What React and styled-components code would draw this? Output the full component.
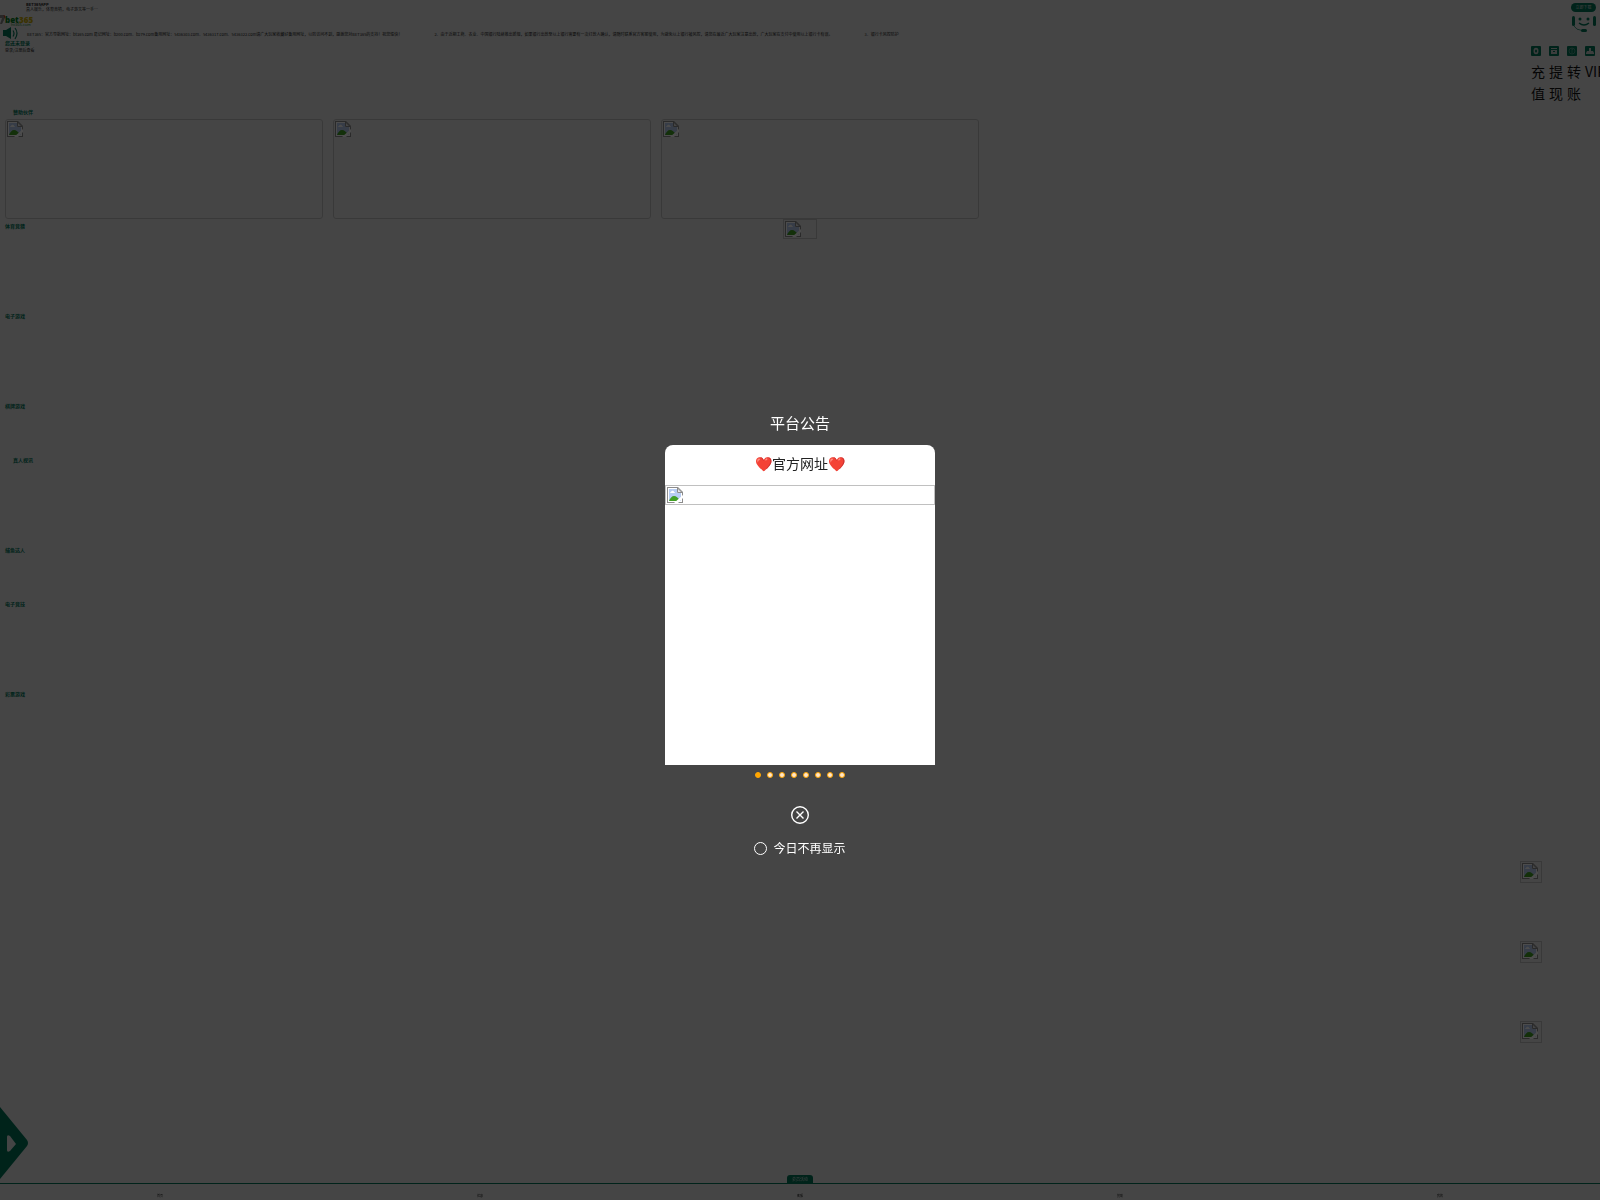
import React, { useState } from "react";
import styled, { createGlobalStyle } from "styled-components";

const partners = ["partner-1", "partner-2", "partner-3"];

const sections = [
  { title: "体育竞猜", height: 90 },
  { title: "电子游戏", height: 90 },
  { title: "棋牌游戏", height: 54 },
  { title: "真人视讯", height: 90, indent: true },
  { title: "捕鱼达人", height: 54 },
  { title: "电子竞技", height: 90 },
  { title: "彩票游戏", height: 90 },
];

const notices = [
  "BET365：官方导航网址：bt365.com 易记网址：b200.com、b279.com备用网址：5436303.com、5436317.com、5436322.com请广大玩家收藏好备用网址，以防访问不到，感谢您对BET365的支持！祝您愉快！",
  "2、由于近期工商、农业、中国银行陆续推出新规，如果银行出款至以上银行需要有一次打款人确认，请随时联系官方客服使用，为避免以上银行被风控，请您在最近广大玩家注意出款，广大玩家在支付中使用以上银行卡有误。",
  "3、银行卡风控防护",
];

const tabs = ["首页", "优惠", "客服", "赞助", "我的"];

const GlobalStyle = createGlobalStyle`
  * {
    box-sizing: border-box;
  }
  body {
    margin: 0;
    background: #e8e8e8;
    color: #222;
    font-family: "Noto Sans CJK SC", "Noto Sans", sans-serif;
    overflow: hidden;
  }
  button {
    border: 0;
    padding: 0;
    background: none;
    font-family: inherit;
    cursor: pointer;
  }
  a {
    color: inherit;
    text-decoration: none;
  }
`;

const BrokenIcon = () => (
  <svg width="16" height="16" viewBox="0 0 16 16" aria-hidden="true">
    <path d="M0 0h11l5 5v11H0z" fill="#8c8c8c" />
    <path d="M1 1h9.500L15 5.500V15H1z" fill="#fff" />
    <path d="M2 2h8v4h4v8H2z" fill="#b8cdf2" />
    <path d="M3 6c0-1 1-1 1-1 1-2 3-1 3 0 1 0 1 1 1 1z" fill="#fff" />
    <path d="M2 14c1-3 3-5 5-5s5 2 6 5z" fill="#42a024" />
    <path d="M10.500 1v4.500H15z" fill="#e8e8e8" stroke="#8c8c8c" />
    <path d="M16 8v3l-5 5H7z" fill="#fff" />
  </svg>
);

const DownloadIcon = () => (
  <svg width="24" height="20" viewBox="0 0 24 20" aria-hidden="true">
    <g fill="#007558">
      <rect x="0" y="2" width="3" height="10" rx="1.500" />
      <rect x="21" y="2" width="3" height="10" rx="1.500" />
      <circle cx="8" cy="5" r="1.500" />
      <circle cx="16" cy="5" r="1.500" />
      <rect x="9" y="15" width="6" height="3" rx="1.500" />
    </g>
    <path d="M7 9q5 4 10 0" fill="none" stroke="#007558" strokeWidth="1.400" />
    <path d="M2 12q2 4 8 4.500" fill="none" stroke="#007558" strokeWidth="0.700" />
  </svg>
);

const SpeakerIcon = () => (
  <svg width="16" height="13" viewBox="0 0 16 13" aria-hidden="true">
    <path d="M0 3h3l5-3v12L3 9H0z" fill="#007558" />
    <path
      d="M10 3.500q2 3 0 6M12 1q4 5 0 11"
      fill="none"
      stroke="#007558"
      strokeWidth="1.200"
    />
  </svg>
);

const actionShapes = {
  deposit: (
    <>
      <ellipse cx="5" cy="5" rx="2.500" ry="3.300" fill="#ccc" />
      <ellipse cx="5" cy="5" rx="1" ry="1.500" fill="#007558" />
    </>
  ),
  withdraw: (
    <>
      <path d="M2 2h6v1H2zM2 4h6v4H2z" fill="#ccc" />
      <path d="M4 5h2v1H4z" fill="#007558" />
    </>
  ),
  transfer: (
    <>
      <circle cx="5" cy="5" r="3" fill="none" stroke="#5fa391" strokeWidth="0.800" />
      <path d="M4 3h2L5 4.500V7" fill="none" stroke="#5fa391" strokeWidth="0.800" />
    </>
  ),
  vip: <path d="M4 2h2v3h2l1 2v1H1V7l1-2h2z" fill="#ccc" />,
};

const actions = [
  { label: "充值", icon: "deposit" },
  { label: "提现", icon: "withdraw" },
  { label: "转账", icon: "transfer" },
  { label: "VIP", icon: "vip" },
];

const Page = styled.div`
  display: flex;
  flex-direction: column;
  min-height: 100vh;
  overflow: hidden;
`;

const Banner = styled.header`
  display: flex;
  justify-content: space-between;
  height: 14px;
  padding: 2px 4px 0 26px;
`;

const AppInfo = styled.div`
  font-size: 4px;
  line-height: 5px;
  color: #222;
`;

const DownloadButton = styled.button`
  width: 25px;
  height: 9px;
  margin-top: 1px;
  border-radius: 5px;
  background: #007558;
  color: #ddd;
  font-size: 4px;
  line-height: 9px;
`;

const LogoRow = styled.div`
  display: flex;
  justify-content: space-between;
  height: 12px;
  padding-right: 4px;
`;

const Brand = styled.a`
  display: flex;
  align-items: flex-start;
  height: 12px;
`;

const NoticeBar = styled.div`
  display: flex;
  align-items: center;
  gap: 8px;
  height: 14px;
  padding-left: 3px;
`;

const NoticeText = styled.div`
  display: flex;
  gap: 32px;
  padding-top: 2px;
  font-size: 4px;
  line-height: 6px;
  white-space: nowrap;
`;

const Account = styled.div`
  display: flex;
  justify-content: space-between;
  height: 68px;
  padding-left: 5px;
`;

const Login = styled.a`
  font-size: 4px;
  line-height: 8px;

  strong {
    display: block;
    font-size: 5px;
    line-height: 6px;
    color: #007558;
  }
`;

const Actions = styled.nav`
  display: grid;
  grid-template-columns: repeat(4, 18px);
  width: 69px;
  padding-top: 6px;
`;

const Action = styled.a`
  width: 14px;
  color: #111;
  font-size: 14px;
  line-height: 22px;

  svg {
    display: block;
    margin-bottom: 4px;
  }
`;

const SectionTitle = styled.h2`
  margin: 0;
  padding-left: ${({ $indent }) => ($indent ? "13px" : "5px")};
  font-size: 5px;
  line-height: 8px;
  color: #007558;
`;

const Partners = styled.div`
  display: grid;
  grid-template-columns: repeat(3, 318px);
  gap: 10px;
  height: 100px;
  margin: 3px 0 0 5px;
`;

const BrokenImage = styled.div`
  width: ${({ $width }) => $width || "100%"};
  height: ${({ $height }) => $height}px;
  padding: 1px;
  border: 1px solid silver;
  border-radius: ${({ $radius }) => $radius || 0}px;
  overflow: hidden;

  svg {
    display: block;
  }
`;

const Section = styled.section`
  display: grid;
  grid-template-columns: 1fr 34px 1fr;
  align-items: start;
  height: ${({ $height }) => $height}px;

  ${SectionTitle} {
    padding-top: 3px;
  }
`;

const FloatingLinks = styled.aside`
  position: fixed;
  right: 58px;
  bottom: 157px;
  display: grid;
  gap: 58px;
`;

const DrawerToggle = styled.button`
  position: fixed;
  left: 0;
  bottom: 20px;
  height: 73px;

  svg {
    display: block;
  }
`;

const TabBar = styled.nav`
  position: fixed;
  left: 0;
  right: 0;
  bottom: 0;
`;

const Promo = styled.a`
  display: block;
  width: 26px;
  height: 8px;
  margin: 0 auto;
  border-radius: 3px 3px 0 0;
  background: #007558;
  color: #ddd;
  font-size: 4px;
  line-height: 8px;
  text-align: center;
`;

const Tabs = styled.div`
  display: grid;
  grid-template-columns: repeat(5, 1fr);
  height: 17px;
  padding-top: 9px;
  border-top: 1px solid #007558;
  font-size: 3px;
  line-height: 6px;
  text-align: center;
`;

const Overlay = styled.div`
  position: fixed;
  inset: 0;
  display: flex;
  flex-direction: column;
  align-items: center;
  padding-top: 412px;
  background: rgba(0, 0, 0, 0.7);
  color: #fff;
`;

const DialogTitle = styled.h1`
  margin: 0 0 11px;
  font-size: 15px;
  font-weight: 400;
  line-height: 22px;
`;

const Card = styled.article`
  width: 270px;
  height: 320px;
  border-radius: 8px 8px 0 0;
  background: #fff;
  color: #222;
`;

const CardTitle = styled.h3`
  margin: 0;
  padding-bottom: 4px;
  font-size: 14px;
  font-weight: 400;
  line-height: 36px;
  text-align: center;
`;

const Dots = styled.div`
  display: flex;
  gap: 6px;
  margin-top: 7px;
`;

const Dot = styled.button`
  width: 6px;
  height: 6px;
  border: 1px solid #ffa500;
  border-radius: 50%;
  background: ${({ $active }) => ($active ? "#ffa500" : "#ffe6cc")};
`;

const CloseButton = styled.button`
  width: 18px;
  height: 18px;
  margin-top: 28px;

  svg {
    display: block;
  }
`;

const Remember = styled.label`
  display: flex;
  align-items: center;
  gap: 6px;
  margin-top: 15px;
  font-size: 12px;
  line-height: 18px;

  input {
    appearance: none;
    width: 13px;
    height: 13px;
    margin: 1px 0 0;
    border: 1px solid #fff;
    border-radius: 50%;
  }

  input:checked {
    background: #ffa500;
  }
`;

const Logo = () => (
  <svg width="36" height="12" viewBox="0 0 36 12" aria-hidden="true">
    <path d="M0 1h4l1 3-3 6H0l2-6H0z" fill="#888" />
    <path d="M4 1l1 3" stroke="#c53b2b" />
    <text x="5" y="9" fontFamily="Open Sans" fontSize="8" fontWeight="800" fill="#087b22">
      bet
    </text>
    <text x="19" y="9" fontFamily="Open Sans" fontSize="8" fontWeight="800" fill="#c5a900">
      365
    </text>
    <text x="11" y="12" fontFamily="Open Sans" fontSize="4" fill="#087b22">
      ht365.com
    </text>
  </svg>
);

const App = () => {
  const [open, setOpen] = useState(true);
  const [slide, setSlide] = useState(0);

  return (
    <>
      <GlobalStyle />
      <Page>
        <Banner>
          <AppInfo>
            <strong>BET365APP</strong>
            <div>真人娱乐，体育竞猜，电子游艺等一手…</div>
          </AppInfo>
          <DownloadButton>立即下载</DownloadButton>
        </Banner>
        <LogoRow>
          <Brand href="#" aria-label="bet365">
            <Logo />
          </Brand>
          <DownloadIcon />
        </LogoRow>
        <NoticeBar>
          <SpeakerIcon />
          <NoticeText>
            {notices.map((notice) => (
              <span key={notice}>{notice}</span>
            ))}
          </NoticeText>
        </NoticeBar>
        <Account>
          <Login href="#">
            <strong>您还未登录</strong>
            登录/注册后查看
          </Login>
          <Actions>
            {actions.map(({ label, icon }) => (
              <Action href="#" key={label}>
                <svg width="10" height="10" viewBox="0 0 10 10" aria-hidden="true">
                  <rect width="10" height="10" rx="1" fill="#007558" />
                  {actionShapes[icon]}
                </svg>
                {label}
              </Action>
            ))}
          </Actions>
        </Account>
        <SectionTitle $indent>赞助伙伴</SectionTitle>
        <Partners>
          {partners.map((partner) => (
            <BrokenImage key={partner} $height={100} $radius={3}>
              <BrokenIcon />
            </BrokenImage>
          ))}
        </Partners>
        {sections.map(({ title, height, indent }, index) => (
          <Section key={title} $height={height}>
            <SectionTitle $indent={indent}>{title}</SectionTitle>
            {index === 0 && (
              <BrokenImage $height={20}>
                <BrokenIcon />
              </BrokenImage>
            )}
          </Section>
        ))}
      </Page>
      <FloatingLinks>
        {[1, 2, 3].map((item) => (
          <BrokenImage key={item} $width="22px" $height={22}>
            <BrokenIcon />
          </BrokenImage>
        ))}
      </FloatingLinks>
      <DrawerToggle aria-label="展开">
        <svg width="28" height="73" viewBox="0 0 28 73">
          <path d="M0 0l27 33q2 3 0 6L0 72z" fill="#007558" />
          <path d="M7 30q0-3 3-1l6 8-6 7q-3 2-3-1z" fill="#e8e8e8" />
        </svg>
      </DrawerToggle>
      <TabBar>
        <Promo href="#">会员活动</Promo>
        <Tabs>
          {tabs.map((tab) => (
            <a href="#" key={tab}>
              {tab}
            </a>
          ))}
        </Tabs>
      </TabBar>
      {open && (
        <Overlay role="dialog" aria-modal="true">
          <DialogTitle>平台公告</DialogTitle>
          <Card>
            <CardTitle>❤️官方网址❤️</CardTitle>
            <BrokenImage $height={20}>
              <BrokenIcon />
            </BrokenImage>
          </Card>
          <Dots>
            {[0, 1, 2, 3, 4, 5, 6, 7].map((dot) => (
              <Dot
                key={dot}
                $active={dot === slide}
                aria-label={`${dot + 1}`}
                onClick={() => setSlide(dot)}
              />
            ))}
          </Dots>
          <CloseButton aria-label="关闭" onClick={() => setOpen(false)}>
            <svg width="18" height="18" viewBox="0 0 18 18">
              <circle cx="9" cy="9" r="8.300" fill="none" stroke="#fff" strokeWidth="1.400" />
              <path d="M5.500 5.500l7 7m0-7l-7 7" stroke="#fff" strokeWidth="1.400" />
            </svg>
          </CloseButton>
          <Remember>
            <input type="checkbox" />
            今日不再显示
          </Remember>
        </Overlay>
      )}
    </>
  );
};

export default App;
